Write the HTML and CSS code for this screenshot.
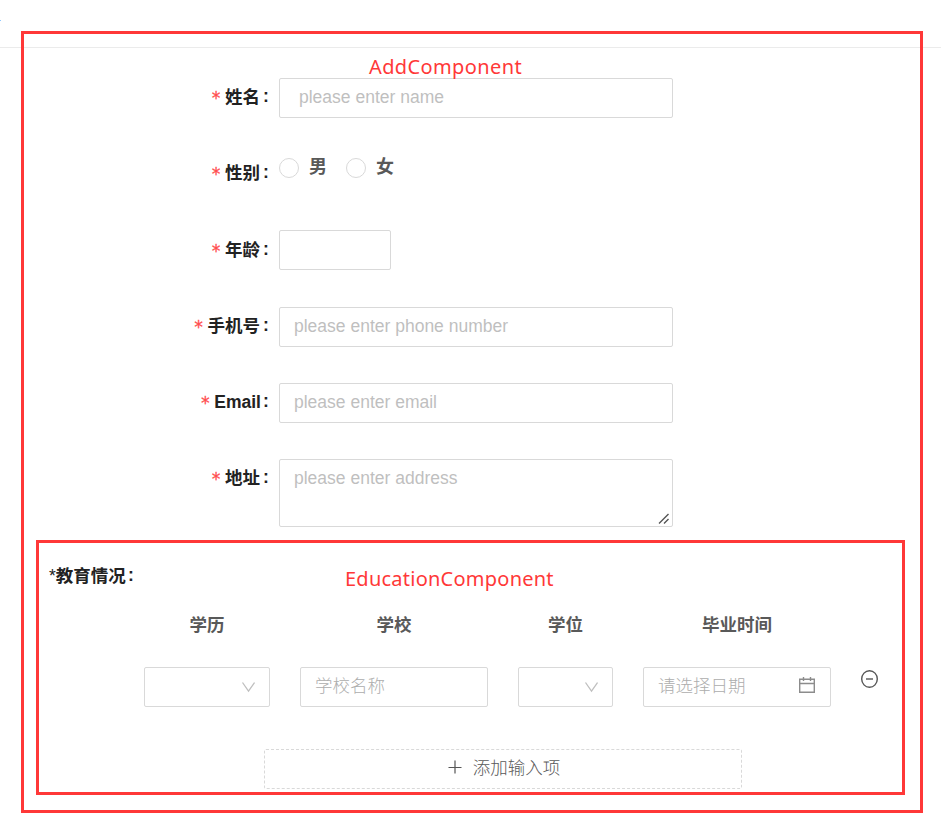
FILE: index.html
```html
<!DOCTYPE html>
<html lang="zh">
<head>
<meta charset="utf-8">
<title>AddComponent</title>
<link rel="stylesheet" href="styles.css">
</head>
<body>
<header class="topbar"><span class="topbar-mark"></span></header>
<main class="frame add">
  <span class="note note-add">AddComponent</span>
  <form class="form">
    <div class="row"><div class="label"><i class="req">*</i><span>姓名</span><b class="colon">:</b></div><div class="control wide name"><span>please enter name</span></div></div>
    <div class="row gender"><div class="label"><i class="req">*</i><span>性别</span><b class="colon">:</b></div>
      <div class="radios"><span class="radio"></span><span class="option">男</span><span class="radio"></span><span class="option">女</span></div></div>
    <div class="row"><div class="label"><i class="req">*</i><span>年龄</span><b class="colon">:</b></div><div class="control age"></div></div>
    <div class="row"><div class="label"><i class="req">*</i><span>手机号</span><b class="colon">:</b></div><div class="control wide"><span>please enter phone number</span></div></div>
    <div class="row"><div class="label"><i class="req">*</i><span class="latin">Email</span><b class="colon">:</b></div><div class="control wide"><span>please enter email</span></div></div>
    <div class="row area-row"><div class="label"><i class="req">*</i><span>地址</span><b class="colon">:</b></div>
      <div class="control wide area"><span>please enter address</span><svg class="grip" width="12" height="12" viewBox="0 0 12 12"><path d="M1 10.5L10.5 1M6 10.5L10.5 6"/></svg></div></div>
  </form>
  <section class="frame education">
    <span class="note note-edu">EducationComponent</span>
    <div class="edu-title"><span class="star">*</span><span>教育情况</span><b class="colon">:</b></div>
    <div class="grid heads"><span>学历</span><span>学校</span><span>学位</span><span>毕业时间</span></div>
    <div class="grid fields">
      <div class="control select"><svg width="14" height="12" viewBox="0 0 14 12"><path d="M1.5 1.5L7.5 10L13.5 1.5"/></svg></div>
      <div class="control"><span>学校名称</span></div>
      <div class="control select"><svg width="14" height="12" viewBox="0 0 14 12"><path d="M1.5 1.5L7.5 10L13.5 1.5"/></svg></div>
      <div class="control date"><span>请选择日期</span><svg width="16" height="17" viewBox="0 0 16 17"><path d="M.7 2.2H15.3V15.3H.7ZM.7 6.5H15.3M4.5 0V4M11.5 0V4"/></svg></div>
      <svg class="remove" width="18" height="18" viewBox="0 0 18 18"><ellipse cx="8.5" cy="9" rx="7.8" ry="8.3"/><path d="M5 9H12"/></svg>
    </div>
    <div class="add-item"><svg width="14" height="14" viewBox="0 0 14 14"><path d="M7 .5V13.5M.5 7.5H13.5"/></svg><span>添加输入项</span></div>
  </section>
</main>
</body>
</html>
```

FILE: styles.css
```css
* { box-sizing: border-box; }
body {
  margin: 0;
  height: 822px;
  overflow: hidden;
  background: #fff;
  color: #595959;
  font: 17.5px/26px "Liberation Sans", "Noto Sans CJK SC", sans-serif;
}
svg { display: block; flex: none; fill: none; }
.topbar { height: 48px; padding-top: 20px; border-bottom: 1px solid #ebebeb; }
.topbar-mark { display: block; width: 1px; height: 1px; background: #91c9ff; }
.frame { position: relative; border: 3px solid #ff3838; }
.add { width: 902px; height: 782px; margin: -17px 0 0 21px; }
.note {
  position: absolute;
  z-index: 1;
  color: #ff3838;
  font: 20px/28px "Noto Sans", sans-serif;
  white-space: nowrap;
}
.note-add { left: 345px; top: 19px; letter-spacing: .38px; }
.note-edu { left: 306px; top: 22px; letter-spacing: .24px; }
.form { display: flex; flex-direction: column; gap: 36.25px; padding-top: 44px; height: 506px; }
.row { display: flex; height: 40px; }
.area-row { height: 68px; }
.label {
  display: flex;
  justify-content: flex-end;
  width: 255px;
  padding: 6px 9px 0 0;
  color: #222;
  font-weight: 700;
}
.req {
  width: 10px;
  margin-right: 4px;
  padding-top: 1px;
  color: #ff4d4f;
  font: 400 17px/26px "DejaVu Sans Mono", monospace;
  -webkit-text-stroke: .3px #ff4d4f;
}
.colon { width: 8px; margin-left: 2px; text-align: center; line-height: 25px; }
.latin { margin-right: -1px; }
.control {
  display: flex;
  height: 40px;
  padding: 5px 14px 0;
  border: 1px solid #d9d9d9;
  border-radius: 2px;
  color: #bfbfbf;
  white-space: nowrap;
}
.wide { width: 394px; }
.name { padding-left: 19px; }
.age { width: 112px; margin-top: -1px; }
.area { position: relative; height: 68px; }
.grip { position: absolute; right: 2px; bottom: 1px; stroke: #555; stroke-width: 1.4; }
.radios { display: flex; align-items: center; height: 26px; font-size: 18px; font-weight: 700; }
.radio { width: 20px; height: 20px; margin-top: 2px; border: 1px solid #d9d9d9; border-radius: 50%; }
.option { width: 18px; margin: 0 19px 0 10px; }
.education { width: 869px; height: 255px; margin-left: 12px; }
.edu-title { display: flex; padding: 20px 0 0 10px; color: #222; font-weight: 700; }
.edu-title .colon { margin-left: 1px; }
.star { font-weight: 400; }
.grid { display: grid; grid-template-columns: 126px 188px 95px 188px 18px; column-gap: 30px; padding-left: 105px; }
.heads { margin-top: 23px; text-align: center; font-weight: 700; }
.fields { margin-top: 29px; }
.fields .control, .add-item { font-family: "Liberation Sans", "Noto Sans CJK SC Light", "Noto Sans CJK SC", sans-serif; font-weight: 300; }
.fields .control { color: #adadad; }
.select { justify-content: flex-end; padding-top: 13px; stroke: #bfbfbf; stroke-width: 1.3; }
.date { justify-content: space-between; padding-right: 15px; }
.date svg { margin-top: 4px; stroke: #8c8c8c; stroke-width: 1.4; }
.remove { margin-top: 3px; stroke: #555; stroke-width: 1.4; }
.add-item {
  display: flex;
  justify-content: center;
  gap: 11px;
  width: 478px;
  height: 40px;
  margin: 42px 0 0 225px;
  padding: 5px 0 0 2px;
  border: 1px dashed #d9d9d9;
  border-radius: 2px;
}
.add-item svg { margin-top: 5px; stroke: #555; stroke-width: 1.2; }
```
